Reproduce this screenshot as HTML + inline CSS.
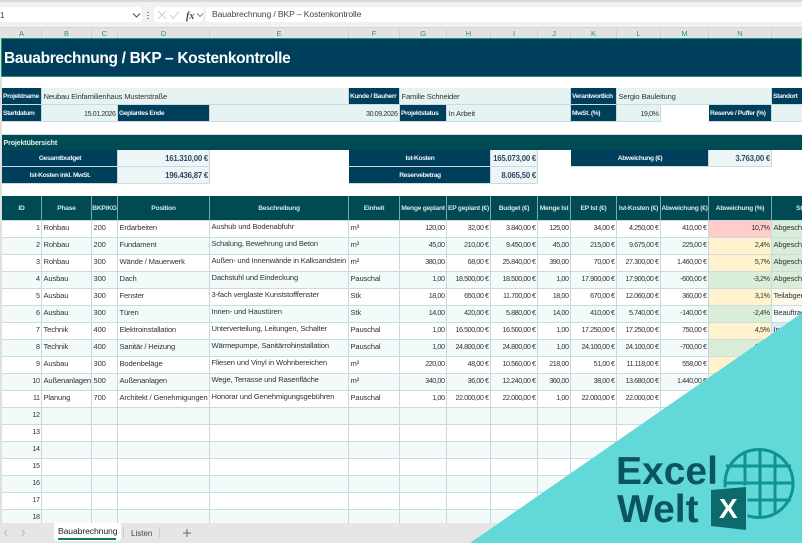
<!DOCTYPE html>
<html lang="de"><head><meta charset="utf-8"><title>Bauabrechnung</title>
<style>
html,body{margin:0;padding:0;background:#fff}
#p{position:relative;width:802px;height:543px;overflow:hidden;background:#fff;font-family:"Liberation Sans",sans-serif;color:#333}
.a{position:absolute}
#top{left:0;top:0;width:802px;height:28px;background:#f1f1f1;border-top:2px solid #d9d9d9;box-sizing:border-box}
.box{position:absolute;background:#fff;border-radius:3px;top:5px;height:15px}
#hd{left:0;top:27px;width:802px;height:11px;background:#e2e2e2;border-top:1px solid #d4d4d4;box-sizing:border-box}
#hd span{position:absolute;top:2px;height:8px;font-size:7.5px;line-height:8px;text-align:center;color:#1f9a78;border-right:1px solid #cfcfcf;box-sizing:border-box}
#strip{left:0;top:38px;width:2px;height:485px;background:#e0e0e0}
#title{left:1px;top:38px;width:801px;height:39px;box-sizing:border-box;background:#003f5c;border:1.5px solid #1f9a6c;color:#fff;font-weight:bold;font-size:15.5px;letter-spacing:-.33px;line-height:39px;padding-left:2px;filter:blur(.25px)}
table{position:absolute;left:2px;top:88px;border-collapse:separate;border-spacing:0;table-layout:fixed;width:838px;font-size:7.6px;letter-spacing:-.16px;filter:blur(.3px)}
td{padding:0 1.5px;box-sizing:border-box;overflow:hidden;white-space:nowrap;border-right:1px solid #c6d9de;border-bottom:1px solid #cbdcdf;vertical-align:middle}
tr{height:17px}
tr:nth-child(n+9) td{padding-bottom:4px}
tr:nth-child(n+9) td:nth-child(5){padding-bottom:5px}
.l{background:#003f5c;color:#e8f2f5;font-weight:bold;font-size:6.7px;letter-spacing:-.38px;padding-left:1px;padding-right:0}
.v{background:#e6f3f3}
.k{background:#eef5f7;font-weight:bold;font-size:7.8px;letter-spacing:-.22px;color:#2f4a60;text-align:right;padding-right:1px}
.c{text-align:center}
.r{text-align:right;font-size:7.2px;letter-spacing:-.45px}
.n{border:0;background:#fff}
.s{background:#004a54;color:#dff0f0;font-weight:bold;font-size:7.2px;letter-spacing:-.2px;border:0;border-top:1px solid #cfdfe3}
.h{background:#004a54;color:#cfe6e6;font-weight:bold;font-size:6.7px;letter-spacing:-.25px;text-align:center;border-right:1px solid #7fa5ad;padding:0!important}
.z td{background:#f3fafa}
.z td.y,td.y{background:#fff2cc}.z td.g,td.g{background:#d9eed9}td.x{background:#ffcccb}td.b{background:#dbe8f5}
td.p{background:#fdf8e8}
#tabs{left:0;top:523px;width:802px;height:20px;background:#e6e6e6;font-size:8.5px;color:#444}
</style></head><body><div id="p">
<div class="a" id="top">
<div class="box" style="left:-2px;width:144px"></div>
<div class="a" style="left:0;top:9px;font-size:8px;line-height:9px">1</div>
<div class="box" style="left:154px;width:49px"></div>
<div class="box" style="left:206px;width:600px"></div>
<div class="a" style="left:212px;top:7px;font-size:8.6px;letter-spacing:-.12px;line-height:11px;color:#444">Bauabrechnung / BKP – Kostenkontrolle</div>
<svg class="a" style="left:0;top:-2px" width="210" height="28" fill="none">
<path d="M133 13.500l3.500 3.500 3.500-3.500" stroke="#555" stroke-width="1.1"/>
<path d="M148 12v1M148 15v1M148 18v1" stroke="#666" stroke-width="1.400"/>
<path d="M158 11l8 8M166 11l-8 8" stroke="#cfcfcf" stroke-width="1"/>
<path d="M170 15l3 3.500 6-7" stroke="#cfcfcf" stroke-width="1"/>
<path d="M197 13.500l3 3 3-3" stroke="#888" stroke-width="1"/>
<text x="186" y="19" font-family="Liberation Serif" font-style="italic" font-weight="bold" font-size="10" fill="#444">fx</text>
</svg>
</div>
<div class="a" id="hd">
<span style="left:2px;width:40px">A</span><span style="left:42px;width:50px">B</span><span style="left:92px;width:26px">C</span><span style="left:118px;width:92px">D</span><span style="left:210px;width:139px">E</span><span style="left:349px;width:51px">F</span><span style="left:400px;width:47px">G</span><span style="left:447px;width:44px">H</span><span style="left:491px;width:47px">I</span><span style="left:538px;width:33px">J</span><span style="left:571px;width:46px">K</span><span style="left:617px;width:44px">L</span><span style="left:661px;width:48px">M</span><span style="left:709px;width:63px">N</span><span style="left:772px;width:68px">O</span>
</div>
<div class="a" id="strip"></div>
<div class="a" id="title">Bauabrechnung / BKP – Kostenkontrolle</div>
<table>
<colgroup><col style="width:40px"><col style="width:50px"><col style="width:26px"><col style="width:92px"><col style="width:139px"><col style="width:51px"><col style="width:47px"><col style="width:44px"><col style="width:47px"><col style="width:33px"><col style="width:46px"><col style="width:44px"><col style="width:48px"><col style="width:63px"><col style="width:68px"></colgroup>
<tr><td class="l">Projektname</td><td class="v" colspan="4">Neubau Einfamilienhaus Musterstraße</td><td class="l">Kunde / Bauherr</td><td class="v" colspan="4">Familie Schneider</td><td class="l">Verantwortlich</td><td class="v" colspan="3">Sergio Bauleitung</td><td class="l">Standort</td></tr>
<tr><td class="l">Startdatum</td><td class="v r" colspan="2">15.01.2026</td><td class="l">Geplantes Ende</td><td class="v r" colspan="2">30.09.2026</td><td class="l">Projektstatus</td><td class="v" colspan="3">In Arbeit</td><td class="l">MwSt. (%)</td><td class="v r">19,0%</td><td class="n"></td><td class="l">Reserve / Puffer (%)</td><td class="v"></td></tr>
<tr style="height:12px"><td class="n" colspan="15"></td></tr>
<tr style="height:16px"><td class="s" colspan="15">Projektübersicht</td></tr>
<tr><td class="l c" colspan="3">Gesamtbudget</td><td class="k">161.310,00 €</td><td class="n"></td><td class="l c" colspan="3">Ist-Kosten</td><td class="k">165.073,00 €</td><td class="n"></td><td class="l c" colspan="3">Abweichung (€)</td><td class="k">3.763,00 €</td><td class="n"></td></tr>
<tr><td class="l c" colspan="3">Ist-Kosten inkl. MwSt.</td><td class="k">196.436,87 €</td><td class="n"></td><td class="l c" colspan="3">Reservebetrag</td><td class="k">8.065,50 €</td><td class="n" colspan="6"></td></tr>
<tr style="height:12px"><td class="n" colspan="15"></td></tr>
<tr style="height:25px"><td class="h">ID</td><td class="h">Phase</td><td class="h">BKP/KG</td><td class="h">Position</td><td class="h">Beschreibung</td><td class="h">Einheit</td><td class="h">Menge geplant</td><td class="h">EP geplant (€)</td><td class="h">Budget (€)</td><td class="h">Menge Ist</td><td class="h">EP Ist (€)</td><td class="h">Ist-Kosten (€)</td><td class="h">Abweichung (€)</td><td class="h">Abweichung (%)</td><td class="h">Status</td></tr>
<tr><td class="r">1</td><td>Rohbau</td><td>200</td><td>Erdarbeiten</td><td>Aushub und Bodenabfuhr</td><td>m³</td><td class="r">120,00</td><td class="r">32,00 €</td><td class="r">3.840,00 €</td><td class="r">125,00</td><td class="r">34,00 €</td><td class="r">4.250,00 €</td><td class="r">410,00 €</td><td class="r x">10,7%</td><td class="g">Abgeschlossen</td></tr>
<tr class="z"><td class="r">2</td><td>Rohbau</td><td>200</td><td>Fundament</td><td>Schalung, Bewehrung und Beton</td><td>m³</td><td class="r">45,00</td><td class="r">210,00 €</td><td class="r">9.450,00 €</td><td class="r">45,00</td><td class="r">215,00 €</td><td class="r">9.675,00 €</td><td class="r">225,00 €</td><td class="r y">2,4%</td><td class="g">Abgeschlossen</td></tr>
<tr><td class="r">3</td><td>Rohbau</td><td>300</td><td>Wände / Mauerwerk</td><td>Außen- und Innenwände in Kalksandstein</td><td>m²</td><td class="r">380,00</td><td class="r">68,00 €</td><td class="r">25.840,00 €</td><td class="r">390,00</td><td class="r">70,00 €</td><td class="r">27.300,00 €</td><td class="r">1.460,00 €</td><td class="r y">5,7%</td><td class="g">Abgeschlossen</td></tr>
<tr class="z"><td class="r">4</td><td>Ausbau</td><td>300</td><td>Dach</td><td>Dachstuhl und Eindeckung</td><td>Pauschal</td><td class="r">1,00</td><td class="r">18.500,00 €</td><td class="r">18.500,00 €</td><td class="r">1,00</td><td class="r">17.900,00 €</td><td class="r">17.900,00 €</td><td class="r">-600,00 €</td><td class="r g">-3,2%</td><td class="g">Abgeschlossen</td></tr>
<tr><td class="r">5</td><td>Ausbau</td><td>300</td><td>Fenster</td><td>3-fach verglaste Kunststofffenster</td><td>Stk</td><td class="r">18,00</td><td class="r">650,00 €</td><td class="r">11.700,00 €</td><td class="r">18,00</td><td class="r">670,00 €</td><td class="r">12.060,00 €</td><td class="r">360,00 €</td><td class="r y">3,1%</td><td class="p">Teilabgerechnet</td></tr>
<tr class="z"><td class="r">6</td><td>Ausbau</td><td>300</td><td>Türen</td><td>Innen- und Haustüren</td><td>Stk</td><td class="r">14,00</td><td class="r">420,00 €</td><td class="r">5.880,00 €</td><td class="r">14,00</td><td class="r">410,00 €</td><td class="r">5.740,00 €</td><td class="r">-140,00 €</td><td class="r g">-2,4%</td><td>Beauftragt</td></tr>
<tr><td class="r">7</td><td>Technik</td><td>400</td><td>Elektroinstallation</td><td>Unterverteilung, Leitungen, Schalter</td><td>Pauschal</td><td class="r">1,00</td><td class="r">16.500,00 €</td><td class="r">16.500,00 €</td><td class="r">1,00</td><td class="r">17.250,00 €</td><td class="r">17.250,00 €</td><td class="r">750,00 €</td><td class="r y">4,5%</td><td class="b">In Arbeit</td></tr>
<tr class="z"><td class="r">8</td><td>Technik</td><td>400</td><td>Sanitär / Heizung</td><td>Wärmepumpe, Sanitärrohinstallation</td><td>Pauschal</td><td class="r">1,00</td><td class="r">24.800,00 €</td><td class="r">24.800,00 €</td><td class="r">1,00</td><td class="r">24.100,00 €</td><td class="r">24.100,00 €</td><td class="r">-700,00 €</td><td class="r g">-2,8%</td><td></td></tr>
<tr><td class="r">9</td><td>Ausbau</td><td>300</td><td>Bodenbeläge</td><td>Fliesen und Vinyl in Wohnbereichen</td><td>m²</td><td class="r">220,00</td><td class="r">48,00 €</td><td class="r">10.560,00 €</td><td class="r">218,00</td><td class="r">51,00 €</td><td class="r">11.118,00 €</td><td class="r">558,00 €</td><td class="r y">5,3%</td><td></td></tr>
<tr class="z"><td class="r">10</td><td>Außenanlagen</td><td>500</td><td>Außenanlagen</td><td>Wege, Terrasse und Rasenfläche</td><td>m²</td><td class="r">340,00</td><td class="r">36,00 €</td><td class="r">12.240,00 €</td><td class="r">360,00</td><td class="r">38,00 €</td><td class="r">13.680,00 €</td><td class="r">1.440,00 €</td><td class="r y">11,8%</td><td></td></tr>
<tr><td class="r">11</td><td>Planung</td><td>700</td><td>Architekt / Genehmigungen</td><td>Honorar und Genehmigungsgebühren</td><td>Pauschal</td><td class="r">1,00</td><td class="r">22.000,00 €</td><td class="r">22.000,00 €</td><td class="r">1,00</td><td class="r">22.000,00 €</td><td class="r">22.000,00 €</td><td class="r"></td><td></td><td></td></tr>
<tr class="z"><td class="r">12</td><td></td><td></td><td></td><td></td><td></td><td></td><td></td><td></td><td></td><td></td><td></td><td></td><td></td><td></td></tr>
<tr><td class="r">13</td><td></td><td></td><td></td><td></td><td></td><td></td><td></td><td></td><td></td><td></td><td></td><td></td><td></td><td></td></tr>
<tr class="z"><td class="r">14</td><td></td><td></td><td></td><td></td><td></td><td></td><td></td><td></td><td></td><td></td><td></td><td></td><td></td><td></td></tr>
<tr><td class="r">15</td><td></td><td></td><td></td><td></td><td></td><td></td><td></td><td></td><td></td><td></td><td></td><td></td><td></td><td></td></tr>
<tr class="z"><td class="r">16</td><td></td><td></td><td></td><td></td><td></td><td></td><td></td><td></td><td></td><td></td><td></td><td></td><td></td><td></td></tr>
<tr><td class="r">17</td><td></td><td></td><td></td><td></td><td></td><td></td><td></td><td></td><td></td><td></td><td></td><td></td><td></td><td></td></tr>
<tr class="z"><td class="r">18</td><td></td><td></td><td></td><td></td><td></td><td></td><td></td><td></td><td></td><td></td><td></td><td></td><td></td><td></td></tr>
</table>
<div class="a" id="tabs">
<div class="a" style="left:54px;top:0;width:67px;height:18px;background:#fff;border-radius:0 0 3px 3px"></div>
<div class="a" style="left:58px;top:3px;font-size:8.6px;letter-spacing:-.1px;line-height:11px;color:#222">Bauabrechnung</div>
<div class="a" style="left:58px;top:15px;width:58px;height:1.5px;background:#107c5a"></div>
<div class="a" style="left:131px;top:5px;line-height:11px;font-size:8px">Listen</div>
<div class="a" style="left:123px;top:4px;width:1px;height:11px;background:#ccc"></div>
<div class="a" style="left:159px;top:4px;width:1px;height:11px;background:#ccc"></div>
<svg class="a" style="left:0;top:0" width="200" height="20" fill="none"><path d="M7 7l-2.500 3 2.500 3M22 7l2.500 3-2.500 3" stroke="#bbb"/><path d="M187 6v8M183 10h8" stroke="#666"/></svg>
</div>
<svg class="a" style="left:0;top:0" width="802" height="543">
<polygon points="470,543 802,313 802,543" fill="#62d8d8"/>
<g fill="none" stroke="#0e9492" stroke-width="3">
<circle cx="759" cy="483.500" r="34"/>
<path d="M745 451v65M760 449v69M775 453v60M726 466h65M725 483h68M727 500h64"/>
</g>
<polygon points="711,490 746,487 746,530 711,526" fill="#0b6b6c" stroke="#62d8d8" stroke-width="3" paint-order="stroke"/>
<text x="616" y="484" font-family="Liberation Sans" font-weight="bold" font-size="39" fill="#0b5560">Excel</text>
<text x="617" y="522" font-family="Liberation Sans" font-weight="bold" font-size="39" fill="#0b5560">Welt</text>
<text x="719" y="518" font-family="Liberation Sans" font-weight="bold" font-size="28" fill="#fff">X</text>
</svg>
</div></body></html>
